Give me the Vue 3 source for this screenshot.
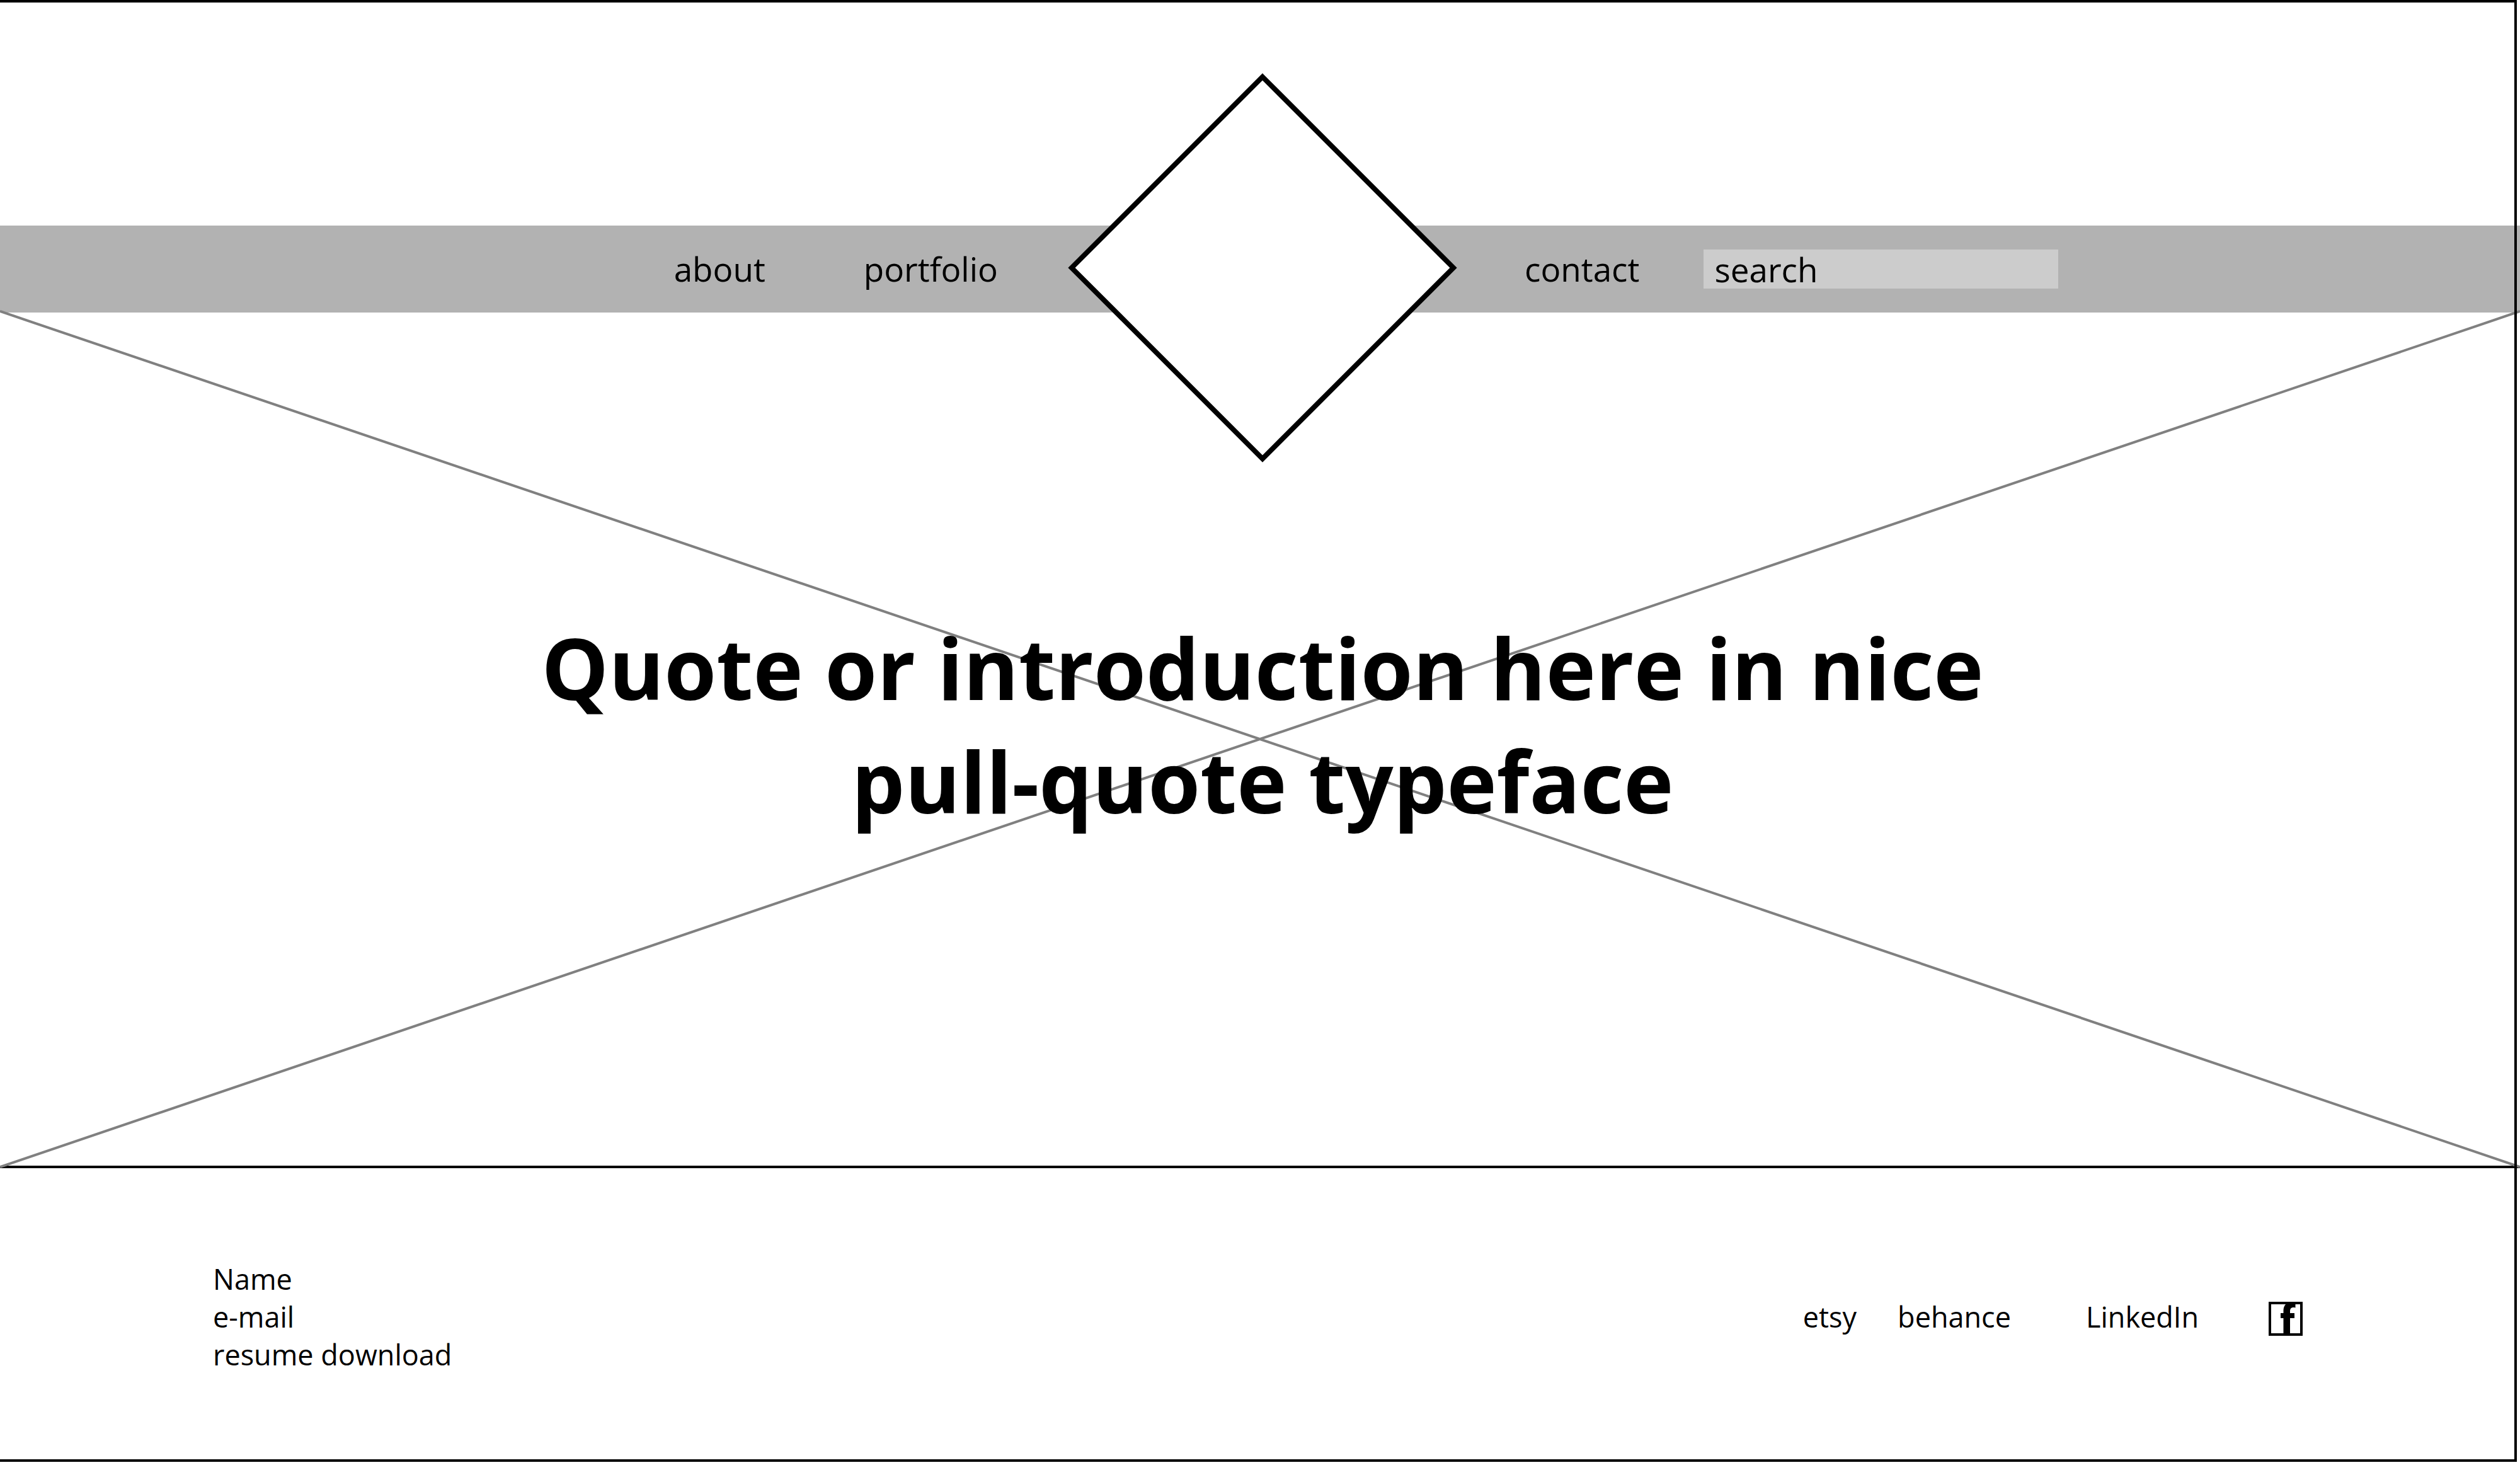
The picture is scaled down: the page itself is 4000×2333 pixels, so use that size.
<script setup>
const contacts = ['Name', 'e-mail', 'resume download']
</script>

<template>
  <div class="page">
    <header class="header">
      <nav class="nav" aria-label="Main">
        <div class="side side-left">
          <a href="#about">about</a>
          <a href="#portfolio">portfolio</a>
        </div>
        <a class="logo" href="#home" aria-label="Home">
          <svg viewBox="0 0 618 618" aria-hidden="true">
            <path d="M309 6 L612 309 L309 612 L6 309 Z" fill="#fff" stroke="#000" stroke-width="8" />
          </svg>
        </a>
        <div class="side side-right">
          <a href="#contact">contact</a>
          <input class="search" type="search" placeholder="search" aria-label="search" />
        </div>
      </nav>
    </header>

    <main class="hero">
      <svg class="cross" viewBox="0 0 100 100" preserveAspectRatio="none" aria-hidden="true">
        <path d="M0 0 L100 100 M0 100 L100 0" vector-effect="non-scaling-stroke" />
      </svg>
      <h1>Quote or introduction here in nice<br />pull-quote typeface</h1>
    </main>

    <footer class="footer">
      <ul class="contacts">
        <li v-for="item in contacts" :key="item">{{ item }}</li>
      </ul>
      <div class="social">
        <a class="etsy" href="#etsy">etsy</a>
        <a class="behance" href="#behance">behance</a>
        <a class="linkedin" href="#linkedin">LinkedIn</a>
        <a class="facebook" href="#facebook" aria-label="Facebook">
          <svg viewBox="0 0 54 54" aria-hidden="true">
            <rect x="2" y="2" width="50" height="50" fill="#fff" stroke="#000" stroke-width="4" />
            <path d="M23.500 51 V26 H19 V18 H23.500 V15 C23.500 9 25 6 28 3 H42.500 V9.500 C37 8 34 10 34 15 V18 H41 V26 H34 V51 Z" />
          </svg>
        </a>
      </div>
    </footer>
    <div class="frame"></div>
  </div>
</template>

<style>
body {
  margin: 0;
  background: #fff;
}
</style>

<style scoped>
.page {
  position: relative;
  padding-bottom: 17px;
  overflow: hidden;
  color: #000;
  font-family: "Open Sans", "Noto Sans", sans-serif;
}

.frame {
  position: absolute;
  inset: 0 5px 13px 0;
  border: 4px solid #000;
  border-left: 0;
  pointer-events: none;
}

a {
  color: inherit;
  text-decoration: none;
}

.header {
  padding-top: 358px;
}

.nav {
  display: grid;
  grid-template-columns: 1fr 618px 1fr;
  grid-template-rows: 138px;
  padding-left: 8px;
  background: #b2b2b2;
  font-size: 53px;
  line-height: 60px;
}

.side {
  display: flex;
  align-items: center;
}

.side-left {
  justify-content: flex-end;
  gap: 156px;
  padding-right: 111px;
}

.side-right {
  gap: 102px;
  padding-left: 107px;
}

.logo {
  position: relative;
  z-index: 1;
  margin-top: -242px;
  height: 618px;
}

.logo svg,
.facebook svg {
  display: block;
  width: 100%;
  height: 100%;
}

.search {
  box-sizing: border-box;
  width: 563px;
  height: 62px;
  padding: 0 17px;
  border: 0;
  border-radius: 0;
  outline: 0;
  appearance: none;
  background: #ccc;
  color: inherit;
  font: inherit;
}

.search::placeholder {
  color: #000;
  opacity: 1;
}

.hero {
  position: relative;
  padding: 473px 0 521px 8px;
  border-bottom: 4px solid #000;
}

.cross {
  position: absolute;
  top: -2px;
  left: 0;
  width: 100%;
  height: calc(100% + 4px);
  overflow: visible;
  fill: none;
  stroke: #808080;
  stroke-width: 4px;
}

h1 {
  position: relative;
  margin: 0;
  font-size: 134px;
  font-weight: 700;
  line-height: 180px;
  text-align: center;
}

.footer {
  display: flex;
  align-items: center;
  justify-content: space-between;
  padding: 146px 345px 136px 338px;
  font-size: 45px;
  line-height: 60px;
}

.contacts {
  margin: 0;
  padding: 0;
  list-style: none;
}

.social {
  display: flex;
  align-items: flex-end;
}

.behance {
  margin-left: 65px;
}

.linkedin {
  margin-left: 119px;
}

.facebook {
  width: 54px;
  height: 54px;
  margin-left: 111px;
}
</style>
